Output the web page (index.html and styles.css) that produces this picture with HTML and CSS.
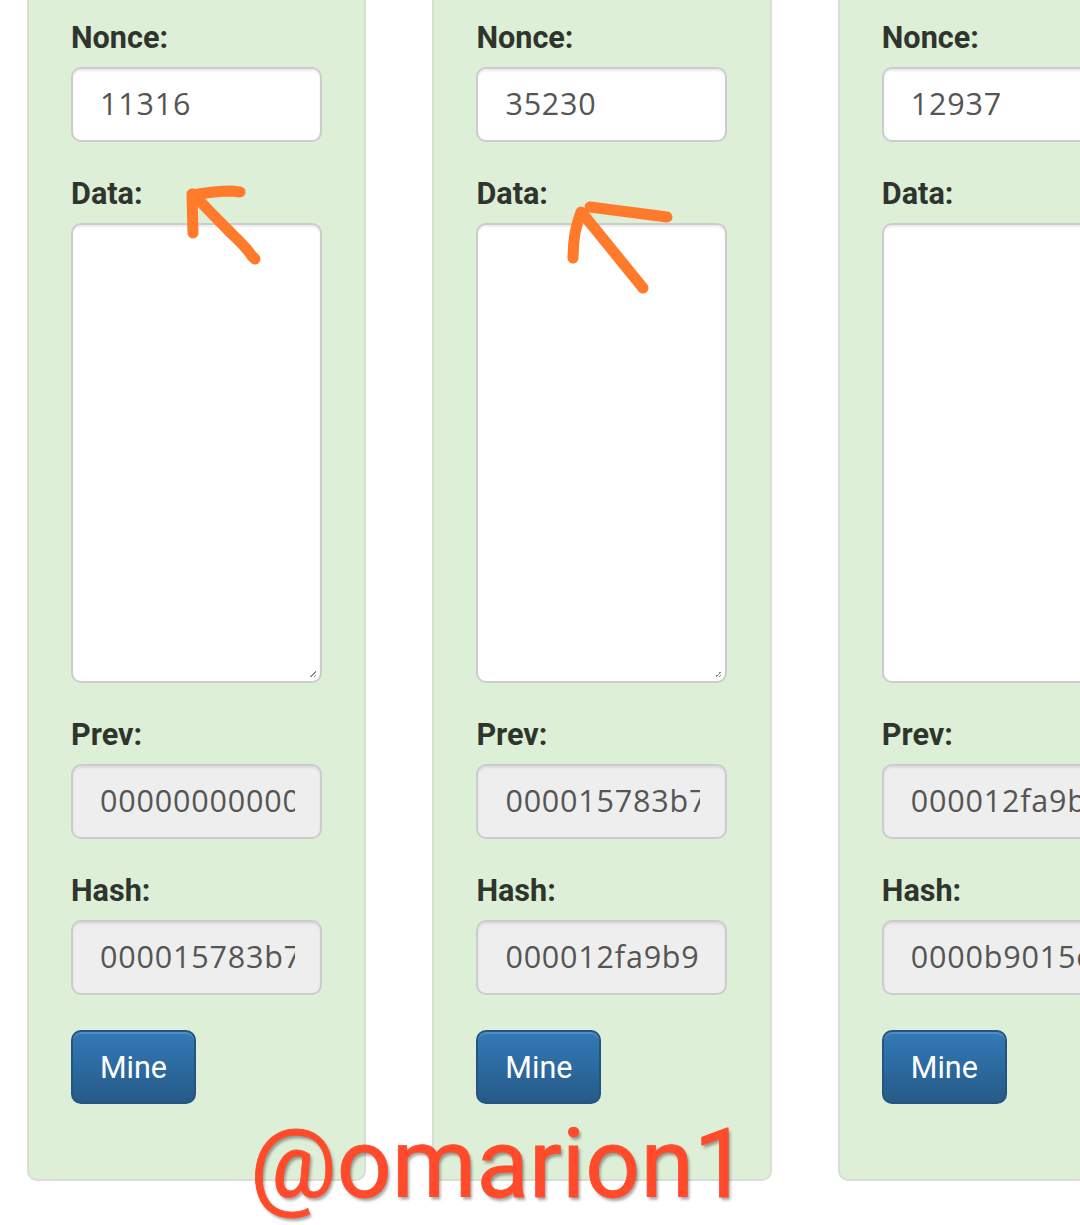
FILE: index.html
```html
<!DOCTYPE html>
<html lang="en">
<head>
  <meta charset="UTF-8" />
  <meta name="viewport" content="width=device-width, initial-scale=1.0">
  <title>Blockchain</title>
  <link rel="stylesheet" href="styles.css">
</head>
<body>
  <div class="page">
    <div class="chain">
      <div class="block">
        <label class="field-label">Nonce:</label>
        <input class="field" type="text" value="11316" />
        <label class="field-label">Data:</label>
        <textarea class="field field-data"></textarea>
        <label class="field-label">Prev:</label>
        <input class="field field-locked" type="text" value="0000000000000000000000000000000000000000000000000000000000000000" readonly />
        <label class="field-label">Hash:</label>
        <input class="field field-locked" type="text" value="000015783b764259d382017d91a36d206d0600e2cbb3567748f46a33fe9297cf" readonly />
        <button class="mine-button">Mine</button>
      </div>

      <div class="block">
        <label class="field-label">Nonce:</label>
        <input class="field" type="text" value="35230" />
        <label class="field-label">Data:</label>
        <textarea class="field field-data"></textarea>
        <label class="field-label">Prev:</label>
        <input class="field field-locked" type="text" value="000015783b764259d382017d91a36d206d0600e2cbb3567748f46a33fe9297cf" readonly />
        <label class="field-label">Hash:</label>
        <input class="field field-locked" type="text" value="000012fa9b916eb9078f8d98a7864e697ae83ed54f5146bd84452cdafd043c19" readonly />
        <button class="mine-button">Mine</button>
      </div>

      <div class="block">
        <label class="field-label">Nonce:</label>
        <input class="field" type="text" value="12937" />
        <label class="field-label">Data:</label>
        <textarea class="field field-data"></textarea>
        <label class="field-label">Prev:</label>
        <input class="field field-locked" type="text" value="000012fa9b916eb9078f8d98a7864e697ae83ed54f5146bd84452cdafd043c19" readonly />
        <label class="field-label">Hash:</label>
        <input class="field field-locked" type="text" value="0000b9015ce2a08b61216ba5a0778545bf4ddd7ceb7bbd85dd8062b29a9140bf" readonly />
        <button class="mine-button">Mine</button>
      </div>
    </div>

    <!-- hand drawn marks on top of the screenshot -->
    <svg class="marks" width="1080" height="1225" viewBox="0 0 1080 1225" fill="none">
      <g class="mark-stroke">
        <path d="M255 259 L252 256 Q245 246 232 234 Q212 214 193 194" />
        <path d="M192 194 L193 233" />
        <path d="M193 195 Q215 191 232 191 L240 192" />
      </g>
      <g class="mark-stroke">
        <path d="M643 288 L583 214" />
        <path d="M581 212 Q573 232 573 258" />
        <path d="M590 207 L667 217" />
      </g>
    </svg>
    <div class="watermark">@omarion1</div>
  </div>
</body>
</html>
```

FILE: styles.css
```css
* {
  margin: 0;
  padding: 0;
  box-sizing: border-box;
}

body {
  font-family: 'Roboto', sans-serif;
  background: #fff;
  color: #2f352d;
}

.page {
  position: relative;
  width: 1080px;
  height: 1225px;
  overflow: hidden;
}

.chain {
  display: flex;
  gap: 66px;
  padding-left: 27px;
}

.block {
  flex: none;
  width: 339.4px;
  height: 1181px;
  padding: 22px 42px 0;
  display: flex;
  flex-direction: column;
  align-items: flex-start;
  background: #deefd8;
  border: 2px solid #d7dfd2;
  border-top: none;
  border-radius: 0 0 10px 10px;
}

.field-label {
  display: block;
  height: 30px;
  line-height: 32px;
  margin-bottom: 15px;
  font-size: 30.6px;
  font-weight: 700;
}

.field {
  display: block;
  flex: none;
  width: 251px;
  height: 75px;
  margin-bottom: 36px;
  padding: 0 25px 4px 27px;
  font-family: 'Open Sans', sans-serif;
  font-size: 30.5px;
  letter-spacing: 0.8px;
  color: #555;
  background: #fff;
  border: 2px solid #ccc;
  border-radius: 10px;
  box-shadow: inset 0 2px 2px rgba(0, 0, 0, 0.08);
  outline: none;
}

.field-data {
  height: 460px;
}

.field-data::-webkit-resizer {
  background: linear-gradient(135deg, transparent 50%, #888 50%, #888 62%, transparent 62%, transparent 76%, #888 76%, #888 88%, transparent 88%) center / 6px 6px no-repeat;
}

.field-locked {
  background: #eee;
}

.mine-button {
  width: 125px;
  height: 74px;
  margin-top: -1px;
  font-family: 'Roboto', sans-serif;
  font-size: 30.5px;
  color: #fff;
  background: linear-gradient(to bottom, #337ab7 0%, #265a88 100%);
  border: 2px solid #245580;
  border-radius: 10px;
  box-shadow: inset 0 2px 0 rgba(255, 255, 255, 0.15);
}

.marks {
  position: absolute;
  top: 0;
  left: 0;
}

.mark-stroke {
  stroke: #ff7a2a;
  stroke-width: 11;
  stroke-linecap: round;
  stroke-linejoin: round;
}

.watermark {
  position: absolute;
  left: 250px;
  top: 1109px;
  font-family: 'Roboto', sans-serif;
  font-size: 96.6px;
  line-height: 110px;
  color: #ff4b2b;
  -webkit-text-stroke: 0.8px #ff4b2b;
  text-shadow: 2px 3px 3px rgba(0, 0, 0, 0.35);
  white-space: nowrap;
}
```
